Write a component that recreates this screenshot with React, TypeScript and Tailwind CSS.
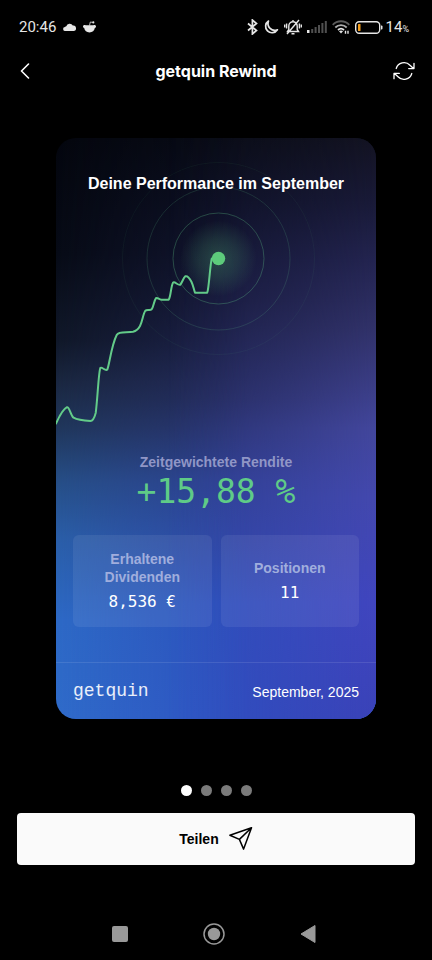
import type { ReactNode } from 'react';

const figures = "font-['DejaVu_Sans_Mono',monospace]";

function StatusBar() {
  return (
    <div className="flex h-[54px] items-center justify-between pr-[23px] pl-[19px] text-[#e6e6e6]">
      <div className="flex items-center gap-[7px]">
        <span className="font-[Roboto,sans-serif] text-[15px]">20:46</span>
        <svg className="h-2 w-[13px]" viewBox="0 0 13 8" fill="currentColor" aria-hidden="true">
          <path d="M2.200 8A2 2 0 0 1 2 4a2 2 0 0 1 1.300-.8A3.500 3.500 0 0 1 9.800 2.600 2.700 2.700 0 0 1 10.800 8z" />
        </svg>
        <svg className="h-3 w-[13px]" viewBox="0 0 13 12" aria-hidden="true">
          <g fill="currentColor">
            <path d="M0 5.600C0 4 1.600 3.700 2.600 4.300h7.800c1-.6 2.600-.3 2.600 1.300 0 .8-.5 1.300-1.200 1.500C11.500 9.800 9.300 11.500 6.500 11.500S1.500 9.800 1.200 7.100C.5 6.900 0 6.400 0 5.600z" />
            <circle cx="10.300" cy="1.400" r="1.100" />
          </g>
          <path d="M6.500 4.500 7.300 1l2.400.4" fill="none" stroke="currentColor" strokeWidth=".8" />
        </svg>
      </div>
      <div className="flex items-center gap-[5px]">
        <svg className="h-4 w-[11px]" viewBox="0 0 11 16" fill="none" stroke="currentColor" strokeWidth="1.700" aria-hidden="true">
          <path d="m1 4.500 8.500 7L5.400 15V1l4.100 3.500-8.500 7" />
        </svg>
        <svg className="h-4 w-4" viewBox="0 0 16 16" fill="none" stroke="currentColor" strokeWidth="1.700" strokeLinejoin="round" aria-hidden="true">
          <path d="M5.500 2A6.400 6.400 0 1 0 14.400 10.800 6.800 6.800 0 0 1 5.500 2z" />
        </svg>
        <svg className="h-4 w-[18px]" viewBox="0 0 18 16" fill="none" stroke="currentColor" strokeWidth="1.400" aria-hidden="true">
          <path d="M3.500 12.500h11l-1.300-2V7A4.200 4.200 0 0 0 4.800 7v3.500zM7.500 14.800h3M9 1v1.800M3 15 15 1M2.600 4.500v5M.700 5.500v3M15.400 4.500v5M17.300 5.500v3" />
        </svg>
        <svg className="h-3 w-5" viewBox="0 0 20 12" fill="currentColor" aria-hidden="true">
          <path d="M0 9h2.500v3H0z" />
          <path d="M4.200 8h2v4h-2zM7.600 6h2v6h-2zM11 4h2v8h-2zM14.400 2h2v10h-2zM17.800 0h2v12h-2z" opacity=".35" />
        </svg>
        <svg className="h-[14px] w-[18px]" viewBox="0 0 18 14" fill="none" stroke="currentColor" strokeWidth="1.800" aria-hidden="true">
          <path d="M.700 4.800a11.500 11.500 0 0 1 16.600 0" opacity=".4" />
          <path d="M3.300 7.500a8 8 0 0 1 11.400 0" opacity=".75" />
          <path d="M6 10a4.500 4.500 0 0 1 6 0" />
          <path d="m7 11.300 2 2.200 2-2.200a3 3 0 0 0-4 0z" fill="currentColor" stroke="none" />
          <path d="M13.500 10.800v3M16 10.800v3" strokeWidth="1.400" />
        </svg>
        <div className="flex items-center gap-[3px]">
          <svg className="h-[13px] w-[28px]" viewBox="0 0 28 13" fill="none" aria-hidden="true">
            <rect x=".7" y=".7" width="24" height="11.600" rx="3.500" stroke="currentColor" strokeWidth="1.400" />
            <rect x="3" y="3" width="2.500" height="7" rx=".5" fill="#f59e1b" />
            <path d="M26 4.500h.500a1 1 0 0 1 1 1v2a1 1 0 0 1-1 1H26z" fill="currentColor" />
          </svg>
          <span className="font-[Roboto,sans-serif] text-[15px]">
            14<span className="text-[9px]">%</span>
          </span>
        </div>
      </div>
    </div>
  );
}

function Header() {
  return (
    <header className="grid h-[34px] grid-cols-[24px_1fr_24px] items-center px-4">
      <button type="button" aria-label="Zurück" className="flex h-6 w-6 items-center">
        <svg className="ml-1 h-4 w-[10px]" viewBox="0 0 10 16" fill="none" stroke="white" strokeWidth="1.600" strokeLinecap="round" strokeLinejoin="round">
          <path d="M8.500 1 1.500 8l7 7" />
        </svg>
      </button>
      <h1 className="text-center font-[Inter,sans-serif] text-base font-bold">getquin Rewind</h1>
      <button type="button" aria-label="Aktualisieren" className="flex h-6 w-6 items-center justify-center">
        <svg className="h-5 w-[22px] shrink-0" viewBox="0 0 22 20" fill="none" stroke="white" strokeWidth="1.300" strokeLinecap="round" strokeLinejoin="round">
          <path d="M3.200 7.500A8.200 8.200 0 0 1 17 4.200l3.500 3.300M21 2.300v5.300h-5.300" />
          <path d="M18.800 12.500A8.200 8.200 0 0 1 5 15.800l-3.500-3.300M1 17.700v-5.300h5.300" />
        </svg>
      </button>
    </header>
  );
}

function CardBackdrop() {
  return (
    <div className="absolute inset-0" aria-hidden="true">
      <div className="absolute inset-0 bg-[linear-gradient(to_bottom,#04060e_0%,#070b16_20%,#101829_35%,#1a2740_42%,#20375c_50%,#264e86_59%,#2a5ea8_69%,#2d69c6_83%,#2f6bca_100%)]" />
      <div className="absolute inset-0 bg-[linear-gradient(to_bottom,#090c17_0%,#0e1126_11%,#181b3e_28%,#252c62_45%,#293373_50%,#2e3f92_59%,#2f45a2_69%,#2c4fba_80%,#2e50c0_100%)] [mask-image:linear-gradient(to_right,transparent_0%,black_60%)]" />
      <div className="absolute inset-0 bg-[linear-gradient(to_bottom,#131322_0%,#191a38_11%,#232450_21%,#31326a_33%,#42469c_50%,#4348ae_62%,#4045be_80%,#3a42b8_100%)] [mask-image:linear-gradient(to_right,transparent_35%,rgb(0_0_0/0.15)_50%,rgb(0_0_0/0.55)_75%,black_100%)]" />
    </div>
  );
}

function PerformanceChart() {
  return (
    <svg className="absolute inset-x-0 top-0 w-full" viewBox="0 0 320 300" fill="none" aria-hidden="true">
      <defs>
        <radialGradient id="glow">
          <stop offset="0" stopColor="#5fcf80" stopOpacity=".26" />
          <stop offset=".5" stopColor="#5fcf80" stopOpacity=".15" />
          <stop offset="1" stopColor="#5fcf80" stopOpacity="0" />
        </radialGradient>
      </defs>
      <circle cx="162.500" cy="120.500" r="38" fill="url(#glow)" />
      <g stroke="#63c98c">
        <circle cx="162.500" cy="120.500" r="45.500" strokeOpacity=".3" />
        <circle cx="162.500" cy="120.500" r="71.500" strokeOpacity=".17" />
        <circle cx="162.500" cy="120.500" r="96" strokeOpacity=".06" />
      </g>
      <path
        d="M0 285.500C3 279 7 271 11 269.200c2.500-.6 3.500 8 6.500 10.500 4 2.300 11 3 17 3.300 2.500 0 4-3.500 5.200-8C41.500 262 42.500 235 44.300 230c1.500-1.800 5 3.500 7 1.500 2-4 4-24 9.400-34.500C63 193 71 195 77 193.800c4-1 5.500-3 7-5.800 2.500-4.500 3-12 5.300-15.300 1.700-1.800 4.700.2 6.400-1.400 2-3 2.300-8.500 4.300-11.100 1.500-1 3 1.500 5.500 1.500h7.200c2-2.500 2.300-14 4.300-17 1.800-1.800 4.800 3 7.300 2 1.700-2 3-6.700 5-8.400 2-.8 4.300 2 6 5.200 2 4 2.600 8.500 3.700 11.200h12.200c1.800-4 2.800-28 4.600-34.200"
        stroke="#63cb89"
        strokeWidth="2"
        strokeLinecap="round"
        strokeLinejoin="round"
      />
      <circle cx="162.500" cy="120.500" r="6.700" fill="#5dcb7b" />
    </svg>
  );
}

function Stat({ label, children }: { label: string; children: ReactNode }) {
  return (
    <div className="flex flex-col items-center justify-center rounded-md bg-white/[0.07] px-6 pt-0.5 text-center">
      <dt className="text-sm leading-[18px] font-bold text-[#a0aedd]">{label}</dt>
      <dd className={`mt-1 text-base leading-6 ${figures}`}>{children}</dd>
    </div>
  );
}

function RewindCard() {
  return (
    <article className="relative mx-14 mt-[50px] overflow-hidden rounded-[20px]">
      <CardBackdrop />
      <PerformanceChart />
      <div className="relative flex flex-col pt-[34px]">
        <h2 className="text-center text-base font-bold">Deine Performance im September</h2>
        <div className="mt-[256px] text-center">
          <p className="text-sm leading-5 font-bold text-[#9096c6]">Zeitgewichtete Rendite</p>
          <p className={`text-[33px] leading-10 text-[#5fcb87] ${figures}`}>+15,88 %</p>
        </div>
        <dl className="mx-[17px] mt-[23px] grid h-[92px] grid-cols-2 gap-[9px]">
          <Stat label="Erhaltene Dividenden">8,536 €</Stat>
          <Stat label="Positionen">11</Stat>
        </dl>
        <footer className="mt-[35px] flex h-[57px] items-center justify-between border-t border-white/10 px-[17px]">
          <span className="font-['Liberation_Mono',monospace] text-lg text-white/90">getquin</span>
          <span className="pt-0.5 text-sm">September, 2025</span>
        </footer>
      </div>
    </article>
  );
}

function Pager() {
  return (
    <nav className="mt-[66px] flex justify-center gap-[9px]" aria-label="Seiten">
      <button type="button" aria-label="Seite 1" aria-current="true" className="h-[11px] w-[11px] rounded-full bg-white" />
      <button type="button" aria-label="Seite 2" className="h-[11px] w-[11px] rounded-full bg-[#7b7b7b]" />
      <button type="button" aria-label="Seite 3" className="h-[11px] w-[11px] rounded-full bg-[#7b7b7b]" />
      <button type="button" aria-label="Seite 4" className="h-[11px] w-[11px] rounded-full bg-[#7b7b7b]" />
    </nav>
  );
}

function SystemNav() {
  return (
    <nav className="mt-[57px] flex h-6 items-center justify-center gap-[70px] pr-1 text-[#999]" aria-label="System">
      <button type="button" aria-label="Übersicht" className="flex h-6 w-6 items-center justify-center">
        <span className="h-4 w-4 rounded-xs bg-current" />
      </button>
      <button type="button" aria-label="Startseite" className="h-6 w-6">
        <svg viewBox="0 0 24 24" fill="none">
          <circle cx="12" cy="12" r="10" stroke="currentColor" strokeWidth="1.500" />
          <circle cx="12" cy="12" r="6.200" fill="currentColor" />
        </svg>
      </button>
      <button type="button" aria-label="Zurück" className="h-6 w-6">
        <svg viewBox="0 0 24 24" fill="currentColor" stroke="currentColor" strokeLinejoin="round">
          <path d="M5 12 19 3.500v17z" />
        </svg>
      </button>
    </nav>
  );
}

export default function App() {
  return (
    <main className="min-h-screen bg-black pb-[14px] font-['Liberation_Sans',sans-serif] text-white">
      <StatusBar />
      <Header />
      <RewindCard />
      <Pager />
      <div className="mt-[17px] px-[17px]">
        <button type="button" className="flex h-[52px] w-full items-center justify-center gap-[10px] rounded bg-[#fafafa] text-sm font-bold text-black">
          Teilen
          <svg className="h-6 w-6" viewBox="0 0 24 24" fill="none" stroke="black" strokeWidth="1.500" strokeLinejoin="round" aria-hidden="true">
            <path d="M22.500.7.900 8.200l9.500 4.200 4.200 9.700zM22.500.7 10.400 12.400" />
          </svg>
        </button>
      </div>
      <SystemNav />
    </main>
  );
}
